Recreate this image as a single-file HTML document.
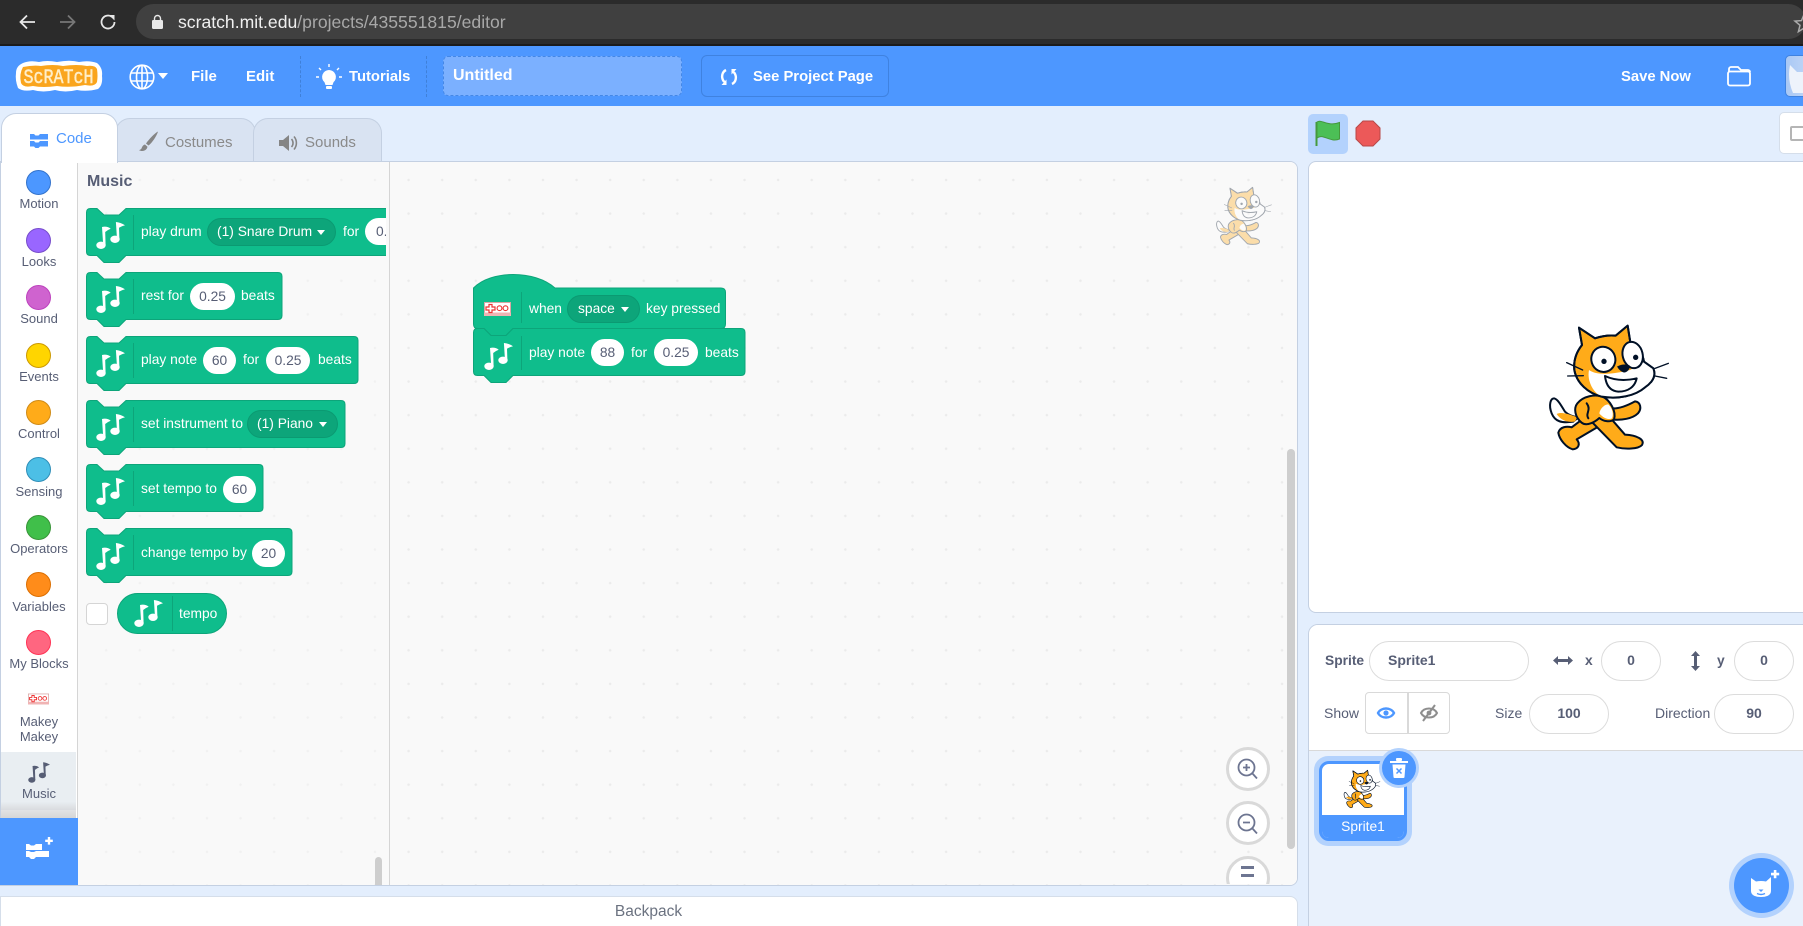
<!DOCTYPE html>
<html><head><meta charset="utf-8"><title>Scratch</title>
<style>
html,body{margin:0;padding:0;width:1803px;height:926px;overflow:hidden;background:#e3eefd;font-family:"Liberation Sans",sans-serif;}
div,span,svg{position:absolute;display:block;}
svg{overflow:visible}
#root{left:0;top:0;width:1803px;height:926px;overflow:hidden;background:#e3eefd}
.t{white-space:nowrap;line-height:20px;height:20px;}
.w{color:#fff;font-weight:bold;font-size:15px}
.cat{color:#575e75;font-size:13px;text-align:center;left:1px;width:76px;}
.dot{left:26px;width:23px;height:23px;border-radius:50%;border-width:1px;border-style:solid;}
.bt{color:#fff;font-size:13.8px;}
.pill{background:#fff;border-radius:14px;height:27px;line-height:27px;text-align:center;color:#575e75;font-size:13.8px;}
.dd{background:#0da57a;border:1px solid #0b9a72;box-sizing:border-box;border-radius:14px;height:28px;line-height:26px;color:#fff;font-size:13.8px;white-space:nowrap;}
.dd i{position:absolute;width:0;height:0;border-left:4.5px solid transparent;border-right:4.5px solid transparent;border-top:5px solid #fff;top:11px;}
.inp{background:#fff;border:1.5px solid #dcdcdc;box-sizing:border-box;border-radius:20px;height:40px;line-height:37px;text-align:center;color:#575e75;font-size:14px;font-weight:bold;}
.lb{color:#575e75;font-size:14px;}
.tab{box-sizing:border-box;border:1px solid #c4d0e2;border-bottom:none;border-radius:15px 15px 0 0;}
.zb{left:1226px;width:38px;height:38px;border:3px solid #d9d9d9;background:#fff;border-radius:50%;}
path.b{fill:#0fbd8c;stroke:#0da57a;stroke-width:1;}
</style></head>
<body>
<svg width="0" height="0" style="position:absolute">
<defs>
<symbol id="mus" viewBox="0 0 29 27" overflow="visible">
<ellipse cx="5" cy="23.3" rx="4.7" ry="3.7"/><path d="M7.2 23 L6 5 Q11 3.8 14.7 6.7 Q12 7.6 9.2 10 L9.6 23Z"/>
<ellipse cx="19" cy="17.3" rx="4.7" ry="3.7"/><path d="M21 17.3 L19.9 0 Q24.5 .3 29 3.3 Q26 4 23 5.7 L23.4 17.3Z"/>
</symbol>
<symbol id="scat" viewBox="80 40 375 385" overflow="visible">
<g stroke="#001026" stroke-width="6" stroke-linejoin="round" stroke-linecap="round">
<path d="M160 335 C125 340 105 335 95 310 C85 285 92 265 102 265 C115 268 125 290 135 305 C145 315 160 320 175 322Z" fill="#fff"/>
<path d="M165 335 C140 338 122 330 110 312 C125 305 145 312 172 322Z" fill="#ffab19" stroke="none"/>
<path d="M195 322 L155 352 C140 348 120 350 115 368 C118 388 138 412 158 418 C176 416 182 402 170 388 L235 350Z" fill="#ffab19"/>
<path d="M205 325 L290 412 C315 418 355 418 366 405 C376 388 350 376 315 374 L268 320Z" fill="#ffab19"/>
<path d="M275 295 C300 297 325 285 345 274 C362 276 366 296 354 310 C338 326 305 332 272 328Z" fill="#ffab19"/>
<path d="M172 280 C190 258 225 252 248 260 C270 270 290 305 282 328 C270 338 250 334 238 324 C225 336 200 350 185 338 C165 322 160 295 172 280Z" fill="#ffab19"/>
<path d="M238 310 C240 295 255 282 265 283 C278 295 282 315 275 326 C262 330 248 322 238 310Z" fill="#fff" stroke="none"/>
<path d="M200 280 C215 300 195 310 205 325" fill="none"/>
<path d="M177 53 L225 85 C245 78 265 75 287 77 L323 47 L331 97 C352 110 368 130 372 155 L400 175 C408 195 400 215 375 232 C345 258 295 268 245 260 C205 250 170 220 163 180 C160 150 170 125 186 105Z" fill="#ffab19"/>
<path d="M207 180 C235 200 290 190 330 180 C350 170 368 158 372 155 L400 175 C408 195 400 215 375 232 C345 258 295 268 245 260 C222 250 200 215 207 180Z" fill="#fff" stroke="none"/>
<path d="M177 53 L225 85 C245 78 265 75 287 77 L323 47 L331 97 C352 110 368 130 372 155 L400 175 C408 195 400 215 375 232 C345 258 295 268 245 260 C205 250 170 220 163 180 C160 150 170 125 186 105Z" fill="none"/>
<ellipse cx="250" cy="148" rx="36" ry="38" fill="#fff" transform="rotate(-18 250 148)"/>
<ellipse cx="338" cy="135" rx="30" ry="40" fill="#fff" transform="rotate(-14 338 135)"/>
<path d="M255 198 C285 212 320 212 350 205 C345 230 325 245 295 245 C270 243 258 225 255 198Z" fill="#fff"/>
<path d="M292 170 C305 162 320 162 330 168 C328 180 320 187 312 187 C303 185 296 178 292 170Z" fill="#001026" stroke-width="1"/>
<path d="M140 158 L188 180 M143 198 L190 197 M405 175 L445 160 M405 198 L440 205" fill="none" stroke-width="4"/>
</g>
<circle cx="252" cy="154" r="8" fill="#001026"/><circle cx="347" cy="142" r="8" fill="#001026"/>
</symbol>
<symbol id="mk" viewBox="0 0 27 14" overflow="visible">
<rect x=".5" y=".5" width="26" height="13" fill="#fff" stroke="#d9a6a6"/><rect x="0" y="10.5" width="27" height="3.5" fill="#f0b4b4"/>
<path d="M5 2.5h3v2.5h3v3h-3v2.500h-3v-2.500h-3v-3h3z" fill="#fff" stroke="#e33" stroke-width="1.2"/>
<circle cx="15.5" cy="6.2" r="2.4" fill="none" stroke="#e33" stroke-width="1.1"/><circle cx="21.5" cy="6.2" r="2.4" fill="none" stroke="#e33" stroke-width="1.1"/>
</symbol>
</defs>
</svg>
<div id="root">

<!-- chrome -->
<div style="left:0;top:0;width:1803px;height:46px;background:#2b2b2b"></div>
<div style="left:0;top:44px;width:1803px;height:2px;background:#1b1b1b"></div>
<div style="left:136px;top:4px;width:1670px;height:35px;background:#404040;border-radius:18px"></div>
<svg style="left:18px;top:13px" width="18" height="18" viewBox="0 0 18 18"><path d="M17 9H3M9 2.5 2.5 9 9 15.5" fill="none" stroke="#e8e8e8" stroke-width="1.8"/></svg>
<svg style="left:59px;top:13px" width="18" height="18" viewBox="0 0 18 18"><path d="M1 9H15M9 2.5 15.5 9 9 15.500" fill="none" stroke="#777" stroke-width="1.8"/></svg>
<svg style="left:99px;top:13px" width="18" height="18" viewBox="0 0 18 18"><path d="M15.5 9A6.500 6.500 0 1 1 13 3.900" fill="none" stroke="#e8e8e8" stroke-width="1.8"/><path d="M10.5 1 16 1V6.500Z" fill="#e8e8e8" transform="translate(-.5 1)"/></svg>
<svg style="left:152px;top:15px" width="11" height="14" viewBox="0 0 11 14"><rect x="0" y="5" width="11" height="9" rx="1.2" fill="#e8e8e8"/><path d="M2.5 6V3.500a3 3 0 0 1 6 0V6" fill="none" stroke="#e8e8e8" stroke-width="1.4"/></svg>
<div class="t" style="left:178px;top:12px;font-size:17.6px;color:#f0f0f0">scratch.mit.edu<span style="position:static;display:inline;color:#a8a8a8">/projects/435551815/editor</span></div>
<svg style="left:1794px;top:13px" width="20" height="20" viewBox="0 0 20 20"><path d="M10 1.500 12.500 7.600 19 8.100 14 12.300 15.600 18.600 10 15.200 4.400 18.600 6 12.300 1 8.100 7.500 7.600Z" fill="none" stroke="#aaa" stroke-width="1.5"/></svg>

<!-- menu -->
<div style="left:0;top:46px;width:1803px;height:60px;background:#4d97ff"></div>
<svg style="left:15px;top:60px" width="88" height="33" viewBox="0 0 88 33">
<path d="M8 3 Q15 0 24 2 Q32 0 42 2 Q55-.5 64 2 Q74 0 82 3 Q88 8 87 16 Q88 25 83 29 Q72 32 62 30 Q50 33 40 30 Q28 33 18 30 Q8 32 3 28 Q0 20 1 13 Q1 6 8 3Z" fill="#fff"/>
<path d="M8 7 Q18 5 26 6 Q38 4 48 6 Q62 4 72 6 Q80 5 82 9 Q83 16 82 22 Q80 27 70 25 Q55 28 42 26 Q28 28 18 26 Q8 28 6 23 Q4 14 8 7Z" fill="#faa51d"/>
<text x="43.500" y="23" text-anchor="middle" font-family="Liberation Mono,monospace" font-size="20" fill="#ffeec8" stroke="#ffeec8" stroke-width=".5" textLength="70" lengthAdjust="spacingAndGlyphs">ScRATcH</text>
</svg>
<svg style="left:129px;top:64px" width="26" height="26" viewBox="0 0 26 26" fill="none" stroke="#fff" stroke-width="1.6"><circle cx="13" cy="13" r="11.800"/><ellipse cx="13" cy="13" rx="5.500" ry="11.800"/><path d="M13 1.200V24.800M1.500 9H24.500M1.500 17H24.500"/></svg>
<div style="left:158px;top:73px;width:0;height:0;border-left:5px solid transparent;border-right:5px solid transparent;border-top:6px solid #fff"></div>
<div class="t w" style="left:191px;top:67px">File</div>
<div class="t w" style="left:246px;top:67px">Edit</div>
<div style="left:300px;top:56px;height:41px;border-left:1px dashed #3f80d9"></div>
<svg style="left:316px;top:64px" width="26" height="28" viewBox="0 0 26 28" fill="#fff"><path d="M13 6a7 7 0 0 1 4.500 12.300L16.500 21h-7l-1-2.700A7 7 0 0 1 13 6Z"/><rect x="10" y="22" width="6" height="3" rx="1"/><path d="M13 0v3M3 4l2 2M23 4l-2 2M0 13h3M26 13h-3" stroke="#fff" stroke-width="1.4"/></svg>
<div class="t w" style="left:349px;top:67px;font-size:14.8px">Tutorials</div>
<div style="left:426px;top:56px;height:41px;border-left:1px dashed #3f80d9"></div>
<div style="left:443px;top:56px;width:239px;height:40px;box-sizing:border-box;background:#7bb0ff;border:1px dashed #4487e6;border-radius:5px"></div>
<div class="t" style="left:453px;top:66px;color:#fff;font-weight:bold;font-size:16px">Untitled</div>
<div style="left:701px;top:55px;width:188px;height:42px;box-sizing:border-box;border:1px solid #3f82e0;border-radius:6px;background:#4d97ff"></div>
<svg style="left:720px;top:68px" width="18" height="18" viewBox="0 0 18 18" fill="none" stroke="#fff" stroke-width="2.4"><path d="M6 2C2 4 1 9 3.500 13L6 15M12 16C16 14 17 9 14.500 5L12 3"/><path d="M6.500 11.500V17H1.500Z M11.500 6.500V1H16.500Z" fill="#fff" stroke="none"/></svg>
<div class="t w" style="left:753px;top:67px;font-size:14.8px">See Project Page</div>
<div class="t w" style="left:1621px;top:67px;font-size:14.8px">Save Now</div>
<svg style="left:1727px;top:66px" width="24" height="20" viewBox="0 0 24 20" fill="none" stroke="#fff" stroke-width="1.8"><rect x="1" y="5.500" width="22" height="14" rx="2"/><path d="M2 6V3a2 2 0 0 1 2-2h7l3 3h7a2 2 0 0 1 2 2"/></svg>
<div style="left:1785px;top:55px;width:30px;height:42px;border:1px solid #3f82e0;box-sizing:border-box;border-radius:5px;background:linear-gradient(90deg,#a9c8f5,#c5d9f6);overflow:hidden"><svg style="left:3px;top:9px" width="26" height="28" viewBox="0 0 26 28"><path d="M1 0 8 7H24V28H4Q-2 14 1 0Z" fill="#eef3fb"/></svg></div>

<!-- tabs -->
<div class="tab" style="left:115px;top:118px;width:141px;height:44px;background:#d9e3f2"></div>
<div class="tab" style="left:253px;top:118px;width:129px;height:44px;background:#d9e3f2"></div>
<div class="tab" style="left:1px;top:113px;width:117px;height:50px;background:#fff;z-index:2;border-bottom:none"></div>
<svg style="left:30px;top:133px;z-index:3" width="18" height="15" viewBox="0 0 18 15" fill="#4d97ff"><path d="M0 1h4l1.500 1.500h3L10 1h8v5.500H0Z"/><path d="M0 8h4l1.500 1.500h3L10 8h8v5.500H10L8.500 15h-3L4 13.500H0Z"/></svg>
<div class="t" style="left:56px;top:129px;font-size:15px;color:#4d97ff;z-index:3">Code</div>
<svg style="left:139px;top:131px" width="20" height="21" viewBox="0 0 20 21" fill="#858585"><path d="M19 .5C16 2 10 8 7 12.500l2.500 2C13 12 18 4.500 19 .5Z"/><path d="M6 13.500c-2.500.5-3 3-3.500 4-.4.8-1.500 1.300-2.500 1.600 2.500 1.600 7.500 1.400 8.500-3.300Z"/></svg>
<div class="t" style="left:165px;top:133px;font-size:15px;color:#8a8a8a">Costumes</div>
<svg style="left:279px;top:134px" width="20" height="18" viewBox="0 0 20 18" fill="#858585"><path d="M0 6h4l6-5v16l-6-5H0Z"/><path d="M12.500 5a6 6 0 0 1 0 8M15 2.500a10 10 0 0 1 0 13" fill="none" stroke="#858585" stroke-width="1.6"/></svg>
<div class="t" style="left:305px;top:133px;font-size:15px;color:#8a8a8a">Sounds</div>

<!-- main panel -->
<div style="left:0;top:161px;width:1298px;height:725px;box-sizing:border-box;border:1px solid #c4d0e2;border-radius:0 8px 8px 0;background:#f9f9f9;overflow:hidden">
  <div style="left:389px;top:0;width:908px;height:723px;background-color:#f9f9f9;background-image:radial-gradient(circle,#ebebeb 1px,transparent 1.5px);background-size:33.6px 33.6px;background-position:1.8px 1.2px"></div>
  <div style="left:77px;top:0;width:312px;height:723px;background-color:#f9f9f9;background-image:radial-gradient(circle,#f1f1f1 1px,transparent 1.5px);background-size:33.6px 33.6px;background-position:11.4px 1.2px;border-right:1px solid #d5d5d5;box-sizing:border-box"></div>
  <div style="left:0;top:0;width:76px;height:723px;background:#fff;border-right:1px solid #d5d5d5"></div>
</div>

<!-- categories -->
<div class="dot" style="top:170px;background:#4c97ff;border-color:#3373cc"></div><div class="t cat" style="top:194px">Motion</div>
<div class="dot" style="top:228px;background:#9966ff;border-color:#774dcb"></div><div class="t cat" style="top:252px">Looks</div>
<div class="dot" style="top:285px;background:#cf63cf;border-color:#bd42bd"></div><div class="t cat" style="top:309px">Sound</div>
<div class="dot" style="top:343px;background:#ffd500;border-color:#cc9900"></div><div class="t cat" style="top:367px">Events</div>
<div class="dot" style="top:400px;background:#ffab19;border-color:#cf8b17"></div><div class="t cat" style="top:424px">Control</div>
<div class="dot" style="top:457px;background:#4cbfe6;border-color:#2e8eb8"></div><div class="t cat" style="top:482px">Sensing</div>
<div class="dot" style="top:515px;background:#40bf4a;border-color:#389438"></div><div class="t cat" style="top:539px">Operators</div>
<div class="dot" style="top:572px;background:#ff8c1a;border-color:#db6e00"></div><div class="t cat" style="top:597px">Variables</div>
<div class="dot" style="top:630px;background:#ff6680;border-color:#ff3355"></div><div class="t cat" style="top:654px">My Blocks</div>
<svg style="left:28px;top:693px" width="21" height="12"><use href="#mk" width="21" height="12"/></svg>
<div class="t cat" style="top:712px">Makey</div><div class="t cat" style="top:727px">Makey</div>
<div style="left:1px;top:752px;width:75px;height:66px;background:linear-gradient(180deg,#e9eef2 0,#e9eef2 75%,#d9dbde 88%,#e2e3e5 88%,#d6d6d6 100%)"></div>
<svg style="left:28px;top:762px;fill:#575e75" width="22" height="21"><use href="#mus" width="22" height="21"/></svg>
<div class="t cat" style="top:784px">Music</div>
<div style="left:0;top:818px;width:78px;height:67px;background:#4d97ff"></div>
<svg style="left:26px;top:836px" width="27" height="24" viewBox="0 0 27 24" fill="#fff"><path d="M0 8h3l2 1.500h3l2-1.500h6v6H0Z"/><path d="M0 15h3l2 1h3l2-1h13v6H10l-2 2H5l-2-2H0Z"/><path d="M21.800 1h2.400v2.600h2.600V6h-2.600v2.600h-2.400V6h-2.600V3.600h2.600Z"/></svg>

<!-- palette -->
<div style="left:78px;top:161px;width:308px;height:723px;overflow:hidden">
<svg style="left:8px;top:47px" width="320" height="56"><path class="b" d="M.5 4.500Q.5 .5 4.500 .5H11L18 7H33L40 .5H330V47.500H40L33 54.500H18L11 47.500H4.500Q.5 47.500 .5 43.500Z"/><path d="M47.500 7V42" stroke="#0da57a"/></svg>
<div style="left:287px;top:57px;width:60px" class="pill">&nbsp;&nbsp;&nbsp;&nbsp;</div>
<div class="t" style="left:298px;top:61px;color:#575e75;font-size:13.8px">0.25</div>
</div>
<div class="t" style="left:87px;top:172px;font-size:16px;font-weight:bold;color:#575e75">Music</div>
<svg style="left:96px;top:222px;fill:#fff" width="29" height="27"><use href="#mus" width="29" height="27"/></svg>
<div class="t bt" style="left:141px;top:222px">play drum</div>
<div class="dd" style="left:207px;top:218px;width:129px;padding-left:9px">(1) Snare Drum<i style="left:109px"></i></div>
<div class="t bt" style="left:343px;top:222px">for</div>

<svg style="left:86px;top:272px" width="200" height="56"><path class="b" d="M.5 4.500Q.5 .5 4.500 .5H11L18 7H33L40 .5H192Q196 .5 196 4.500V43.500Q196 47.500 192 47.500H40L33 54.500H18L11 47.500H4.500Q.5 47.500 .5 43.500Z"/><path d="M47.500 7V42" stroke="#0da57a"/></svg>
<svg style="left:96px;top:286px;fill:#fff" width="29" height="27"><use href="#mus" width="29" height="27"/></svg>
<div class="t bt" style="left:141px;top:286px">rest for</div>
<div class="pill" style="left:190px;top:283px;width:45px">0.25</div>
<div class="t bt" style="left:241px;top:286px">beats</div>

<svg style="left:86px;top:336px" width="275" height="56"><path class="b" d="M.5 4.500Q.5 .5 4.500 .5H11L18 7H33L40 .5H268Q272 .5 272 4.500V43.500Q272 47.500 268 47.500H40L33 54.500H18L11 47.500H4.500Q.5 47.500 .5 43.500Z"/><path d="M47.500 7V42" stroke="#0da57a"/></svg>
<svg style="left:96px;top:350px;fill:#fff" width="29" height="27"><use href="#mus" width="29" height="27"/></svg>
<div class="t bt" style="left:141px;top:350px">play note</div>
<div class="pill" style="left:203px;top:347px;width:33px">60</div>
<div class="t bt" style="left:243px;top:350px">for</div>
<div class="pill" style="left:266px;top:347px;width:44px">0.25</div>
<div class="t bt" style="left:318px;top:350px">beats</div>

<svg style="left:86px;top:400px" width="262" height="56"><path class="b" d="M.5 4.500Q.5 .5 4.500 .5H11L18 7H33L40 .5H255Q259 .5 259 4.500V43.500Q259 47.500 255 47.500H40L33 54.500H18L11 47.500H4.500Q.5 47.500 .5 43.500Z"/><path d="M47.500 7V42" stroke="#0da57a"/></svg>
<svg style="left:96px;top:414px;fill:#fff" width="29" height="27"><use href="#mus" width="29" height="27"/></svg>
<div class="t bt" style="left:141px;top:414px">set instrument to</div>
<div class="dd" style="left:247px;top:410px;width:91px;padding-left:9px">(1) Piano<i style="left:71px"></i></div>

<svg style="left:86px;top:464px" width="180" height="56"><path class="b" d="M.5 4.500Q.5 .5 4.500 .5H11L18 7H33L40 .5H173Q177 .5 177 4.500V43.500Q177 47.500 173 47.500H40L33 54.500H18L11 47.500H4.500Q.5 47.500 .5 43.500Z"/><path d="M47.500 7V42" stroke="#0da57a"/></svg>
<svg style="left:96px;top:478px;fill:#fff" width="29" height="27"><use href="#mus" width="29" height="27"/></svg>
<div class="t bt" style="left:141px;top:479px">set tempo to</div>
<div class="pill" style="left:223px;top:476px;width:33px">60</div>

<svg style="left:86px;top:528px" width="210" height="56"><path class="b" d="M.5 4.500Q.5 .5 4.500 .5H11L18 7H33L40 .5H202Q206 .5 206 4.500V43.500Q206 47.500 202 47.500H40L33 54.500H18L11 47.500H4.500Q.5 47.500 .5 43.500Z"/><path d="M47.500 7V42" stroke="#0da57a"/></svg>
<svg style="left:96px;top:543px;fill:#fff" width="29" height="27"><use href="#mus" width="29" height="27"/></svg>
<div class="t bt" style="left:141px;top:543px">change tempo by</div>
<div class="pill" style="left:252px;top:540px;width:33px">20</div>

<div style="left:86px;top:603px;width:22px;height:22px;box-sizing:border-box;background:#fff;border:1px solid #d5d5d5;border-radius:4px"></div>
<div style="left:117px;top:593px;width:110px;height:41px;background:#0fbd8c;border-radius:21px;box-sizing:border-box;border:1px solid #0da57a"></div>
<div style="left:171.5px;top:596px;height:35px;border-left:1px solid #0da57a"></div>
<svg style="left:134px;top:600px;fill:#fff" width="29" height="27"><use href="#mus" width="29" height="27"/></svg>
<div class="t bt" style="left:179px;top:604px">tempo</div>
<div style="left:375px;top:857px;width:7px;height:28px;background:#cecece;border-radius:4px 4px 0 0"></div>

<!-- workspace -->
<svg style="left:473px;top:274px" width="280" height="112">
<path class="b" d="M.5 24Q.5 14 .5 14C18 -4 62 -4 82 14H248Q252.500 14 252.500 18.500V50Q252.500 54.500 248 54.500H40L33 61.500H18L11 54.500H4.500Q.5 54.500 .5 50Z"/>
<path class="b" d="M.5 58.500Q.5 54.500 4.500 54.500H11L18 61.500H33L40 54.500H268Q272 54.500 272 58.500V97.500Q272 101.500 268 101.500H40L33 108.500H18L11 101.500H4.500Q.5 101.500 .5 97.500Z"/>
<path d="M48.500 18V49M48.500 62V96" stroke="#0da57a"/>
</svg>
<svg style="left:484px;top:302px" width="27" height="14"><use href="#mk" width="27" height="14"/></svg>
<svg style="left:484px;top:343px;fill:#fff" width="29" height="27"><use href="#mus" width="29" height="27"/></svg>
<div class="t bt" style="left:529px;top:299px">when</div>
<div class="dd" style="left:567px;top:295px;width:73px;padding-left:10px">space<i style="left:53px"></i></div>
<div class="t bt" style="left:646px;top:299px">key pressed</div>
<div class="t bt" style="left:529px;top:343px">play note</div>
<div class="pill" style="left:591px;top:339px;width:33px">88</div>
<div class="t bt" style="left:631px;top:343px">for</div>
<div class="pill" style="left:654px;top:339px;width:44px">0.25</div>
<div class="t bt" style="left:705px;top:343px">beats</div>

<svg style="left:1215px;top:186px;opacity:.35" width="58" height="60"><use href="#scat" width="58" height="60"/></svg>
<div style="left:1287px;top:449px;width:8px;height:400px;background:#cecece;border-radius:4px"></div>
<div class="zb" style="top:747px"></div>
<svg style="left:1237px;top:758px" width="22" height="22" viewBox="0 0 22 22" fill="none" stroke="#6d7591" stroke-width="1.8"><circle cx="9.500" cy="9.500" r="8"/><path d="M15 15l5 5.500M6 9.500h7M9.500 6v7"/></svg>
<div class="zb" style="top:801px"></div>
<svg style="left:1237px;top:813px" width="22" height="22" viewBox="0 0 22 22" fill="none" stroke="#6d7591" stroke-width="1.8"><circle cx="9.500" cy="9.500" r="8"/><path d="M15 15l5 5.500M6 9.500h7"/></svg>
<div style="left:1220px;top:852px;width:60px;height:32px;overflow:hidden"><div class="zb" style="left:6px;top:4px"></div><div style="left:21px;top:14px;width:13px;height:3px;background:#6d7591"></div><div style="left:21px;top:22px;width:13px;height:3px;background:#6d7591"></div></div>

<!-- backpack -->
<div style="left:0;top:896px;width:1298px;height:40px;box-sizing:border-box;background:#fff;border:1px solid #d5deea;border-radius:0 8px 0 0"></div>
<div class="t" style="left:0;top:902px;width:1297px;text-align:center;color:#6b7280;font-size:15.5px">Backpack</div>

<!-- stage controls -->
<div style="left:1308px;top:114px;width:40px;height:40px;background:#b3d2fd;border-radius:5px"></div>
<svg style="left:1315px;top:120px" width="26" height="27" viewBox="0 0 26 27"><path d="M1.500 26V2" stroke="#45993d" stroke-width="2"/><path d="M2 2C7-1 13 7 24.500 2.500V19C15 23 8 13 2 18Z" fill="#4cbf56" stroke="#45993d" stroke-width="1"/></svg>
<svg style="left:1355px;top:120px" width="26" height="27" viewBox="0 0 26 27"><path d="M8 1H18L25 8V19L18 26H8L1 19V8Z" fill="#ec5959" stroke="#b84848" stroke-width="1"/></svg>
<div style="left:1779px;top:112px;width:40px;height:42px;box-sizing:border-box;background:#fff;border:1px solid #d5deea;border-radius:5px"></div>
<div style="left:1790px;top:126px;width:22px;height:15px;box-sizing:border-box;border:2px solid #b5b5b5;border-radius:2px"></div>

<!-- stage -->
<div style="left:1308px;top:161px;width:520px;height:452px;box-sizing:border-box;background:#fff;border:1px solid #c4d0e2;border-radius:8px"></div>
<svg style="left:1520px;top:310px" width="170" height="150" viewBox="0 0 510 450"><use href="#scat" x="80" y="40" width="375" height="385"/></svg>

<!-- sprite panel -->
<div style="left:1308px;top:624px;width:520px;height:320px;box-sizing:border-box;background:#e9f1fc;border:1px solid #c4d0e2;border-radius:10px 0 0 0;overflow:hidden"><div style="left:0;top:0;width:520px;height:125px;background:#fff;border-bottom:1px solid #d9d9d9"></div></div>
<div class="t" style="left:1325px;top:651px;font-size:13.8px;font-weight:bold;color:#575e75">Sprite</div>
<div class="inp" style="left:1369px;top:641px;width:160px;text-align:left;padding-left:18px">Sprite1</div>
<svg style="left:1553px;top:655px" width="20" height="11" viewBox="0 0 20 11" fill="#575e75"><path d="M0 5.500 5 1V4H15V1L20 5.500 15 10V7H5V10Z"/></svg>
<div class="t" style="left:1585px;top:651px;font-size:13.8px;font-weight:bold;color:#575e75">x</div>
<div class="inp" style="left:1601px;top:641px;width:60px">0</div>
<svg style="left:1690px;top:651px" width="11" height="20" viewBox="0 0 11 20" fill="#575e75"><path d="M5.500 0 10 5H7V15H10L5.500 20 1 15H4V5H1Z"/></svg>
<div class="t" style="left:1717px;top:651px;font-size:13.8px;font-weight:bold;color:#575e75">y</div>
<div class="inp" style="left:1734px;top:641px;width:60px">0</div>
<div class="t lb" style="left:1324px;top:703px">Show</div>
<div style="left:1365px;top:692px;width:85px;height:42px;box-sizing:border-box;background:#fff;border:1px solid #d9d9d9;border-radius:4px"></div>
<div style="left:1407px;top:692px;height:42px;border-left:2px solid #d9d9d9"></div>
<svg style="left:1377px;top:706px" width="18" height="14" viewBox="0 0 18 14"><path d="M1 7C4 1 14 1 17 7 14 13 4 13 1 7Z" fill="none" stroke="#4d97ff" stroke-width="2.4"/><circle cx="9" cy="7" r="2.600" fill="#4d97ff"/></svg>
<svg style="left:1420px;top:704px" width="18" height="18" viewBox="0 0 18 18"><path d="M1 9C4 3 14 3 17 9 14 15 4 15 1 9Z" fill="none" stroke="#8e8e8e" stroke-width="2"/><circle cx="9" cy="9" r="2.400" fill="#8e8e8e"/><path d="M15 1 3 17" stroke="#8e8e8e" stroke-width="2"/></svg>
<div class="t lb" style="left:1495px;top:703px">Size</div>
<div class="inp" style="left:1529px;top:694px;width:80px">100</div>
<div class="t lb" style="left:1655px;top:703px">Direction</div>
<div class="inp" style="left:1714px;top:694px;width:80px">90</div>

<!-- sprite tile -->
<div style="left:1314px;top:756px;width:98px;height:90px;background:#b3d2fd;border-radius:14px"></div>
<div style="left:1319px;top:761px;width:88px;height:80px;box-sizing:border-box;background:#fff;border:3px solid #4d97ff;border-radius:10px;overflow:hidden"><div style="left:-3px;top:51px;width:88px;height:30px;background:#4d97ff"></div></div>
<svg style="left:1343px;top:769px" width="38" height="40"><use href="#scat" width="38" height="40"/></svg>
<div class="t" style="left:1319px;top:817px;width:88px;text-align:center;color:#fff;font-size:13.8px">Sprite1</div>
<div style="left:1379px;top:748px;width:40px;height:40px;border-radius:50%;background:#b3d2fd"></div>
<div style="left:1382px;top:751px;width:34px;height:34px;border-radius:50%;background:#4d97ff"></div>
<svg style="left:1390px;top:758px" width="18" height="20" viewBox="0 0 18 20" fill="#fff"><rect x="0" y="3" width="18" height="2"/><rect x="6" y="0" width="6" height="3" rx="1"/><path d="M2.500 6.500h13l-1 12.500a1 1 0 0 1-1 1h-9a1 1 0 0 1-1-1Z"/><path d="M6.500 10.500l5 5M11.500 10.500l-5 5" stroke="#4d97ff" stroke-width="1.5"/></svg>

<!-- add sprite -->
<div style="left:1729px;top:853px;width:65px;height:65px;border-radius:50%;background:#b3d2fd"></div>
<div style="left:1734px;top:858px;width:55px;height:55px;border-radius:50%;background:#4d97ff"></div>
<svg style="left:1750px;top:870px" width="32" height="29" viewBox="0 0 32 29"><path d="M1 8 6 11.500Q11 10.500 16 11.500L21 7V21C21 25.500 16 27 11 27 6 27 1 25.500 1 21Z" fill="#fff"/><path d="M8.500 19.500h5l-2.500 2.500Z" fill="#4d97ff"/><path d="M7 23.500q4 2 8 0" fill="none" stroke="#4d97ff" stroke-width="1.4"/><path d="M23.800 0h2.600v2.800h2.800v2.600h-2.800v2.800h-2.600V5.400H21V2.800h2.800Z" fill="#fff"/></svg>
</div>
</body></html>
